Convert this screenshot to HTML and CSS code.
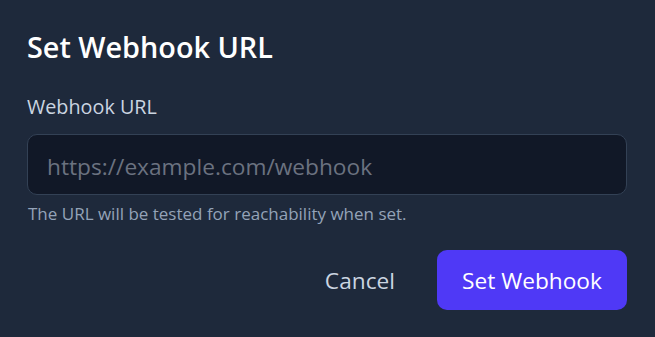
FILE: index.html
```html
<!DOCTYPE html>
<html lang="en">
<head>
<meta charset="utf-8">
<title>Set Webhook URL</title>
<link rel="stylesheet" href="styles.css">
</head>
<body>
<div class="dialog">
  <h2 class="dialog-title">Set Webhook URL</h2>
  <label class="field-label" for="url">Webhook URL</label>
  <input class="field-input" id="url" type="text" placeholder="https://example.com/webhook">
  <p class="field-help">The URL will be tested for reachability when set.</p>
  <div class="actions">
    <button class="btn btn-cancel" type="button">Cancel</button>
    <button class="btn btn-primary" type="button">Set Webhook</button>
  </div>
</div>
</body>
</html>
```

FILE: styles.css
```css
html, body {
  margin: 0;
  padding: 0;
  background: #1e293b;
}
body {
  font-family: "Open Sans", "Noto Sans", sans-serif;
  width: 655px;
  height: 337px;
  overflow: hidden;
}
.dialog {
  display: flex;
  flex-direction: column;
  padding: 28px 28px 0 27px;
}
.dialog-title {
  margin: 0;
  font-size: 28.8px;
  line-height: 38px;
  font-weight: 600;
  color: #ffffff;
}
.field-label {
  margin-top: 28px;
  font-size: 19.8px;
  line-height: 26px;
  color: #cbd5e1;
}
.field-input {
  margin-top: 14px;
  box-sizing: border-box;
  width: 600px;
  height: 61px;
  padding: 3px 19px 0;
  background: #111827;
  border: 1px solid #334155;
  border-radius: 10px;
  font-family: inherit;
  font-size: 22.7px;
  color: #e2e8f0;
  outline: none;
}
.field-input::placeholder {
  color: #6b7280;
}
.field-help {
  margin: 8px 0 0 1px;
  font-size: 17px;
  line-height: 22px;
  color: #94a3b8;
}
.actions {
  display: flex;
  justify-content: flex-end;
  align-items: center;
  gap: 12px;
  margin-top: 25px;
}
.btn {
  font-family: inherit;
  font-size: 22.7px;
  border: none;
  border-radius: 10px;
  height: 60px;
  padding-top: 2px;
  cursor: pointer;
}
.btn-cancel {
  background: transparent;
  color: #cbd5e1;
  padding-left: 30px;
  padding-right: 30px;
}
.btn-primary {
  background: #4f39f6;
  color: #ffffff;
  width: 190px;
  padding-left: 0;
  padding-right: 0;
}
```
